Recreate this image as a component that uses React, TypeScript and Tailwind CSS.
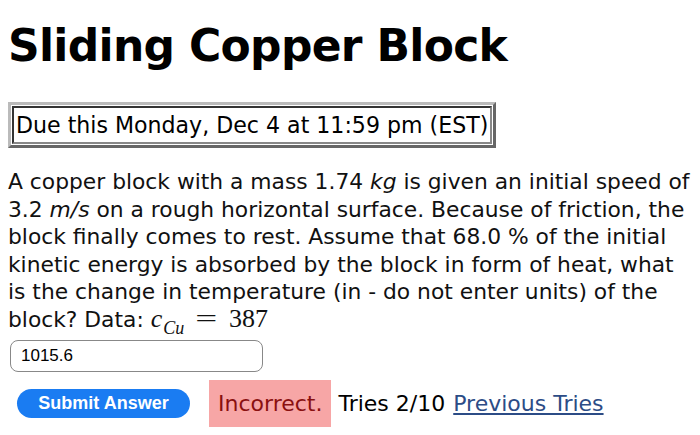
export default function App() {
  return (
    <div className="min-h-[435px] bg-white px-2 text-black [font-family:'DejaVu_Sans',Verdana,sans-serif]">
      <h1 className="pt-[18px] text-[44px] leading-[56px] font-bold tracking-[-0.7px]">Sliding Copper Block</h1>

      <table className="mt-[28px] border-[3px] [border-style:outset] border-[#bbb] [border-spacing:1px] [border-collapse:separate]">
        <tbody>
          <tr>
            <td className="border-2 [border-style:inset] border-[#888] px-[2px] py-0 text-[22.1px] leading-[34px]">
              Due this Monday, Dec 4 at 11:59 pm (EST)
            </td>
          </tr>
        </tbody>
      </table>

      <p className="mt-[20px] w-[685px] text-[21.8px] leading-[27.6px] text-[#111]">
        A copper block with a mass 1.74 <i>kg</i> is given an initial speed of 3.2 <i>m/s</i> on a rough horizontal surface. Because of friction, the block finally comes to rest. Assume that 68.0 % of the initial kinetic energy is absorbed by the block in form of heat, what is the change in temperature (in - do not enter units) of the block? Data:{' '}
        <span className="[font-family:'Liberation_Serif',serif] text-[26px] leading-[20px]">
          <i>c</i>
          <i className="relative top-[7px] ml-[1px] text-[18px]">Cu</i>
          <span className="mx-[15px] inline-block scale-x-150">=</span>387
        </span>
      </p>

      <div className="mt-[6px] ml-[2px] flex h-[32px] w-[253px] items-center rounded-[8px] border border-[#888] px-[10px] text-[17px] [font-family:'Liberation_Sans',Arial,sans-serif]">
        1015.6
      </div>

      <div className="mt-[8px] flex items-center">
        <button className="ml-[9px] h-[29px] w-[173px] rounded-full bg-[#1a7cf2] text-[18px] font-bold text-white [font-family:'Liberation_Sans',Arial,sans-serif]">
          Submit Answer
        </button>
        <span className="ml-[19px] flex h-[47px] items-center bg-[#f7a6a6] px-[9px] text-[22px] text-[#8a1010]">Incorrect.</span>
        <span className="ml-[7px] text-[22px]">Tries 2/10</span>
        <a className="ml-[8px] text-[22px] text-[#2c4c86] underline">Previous Tries</a>
      </div>
    </div>
  );
}
